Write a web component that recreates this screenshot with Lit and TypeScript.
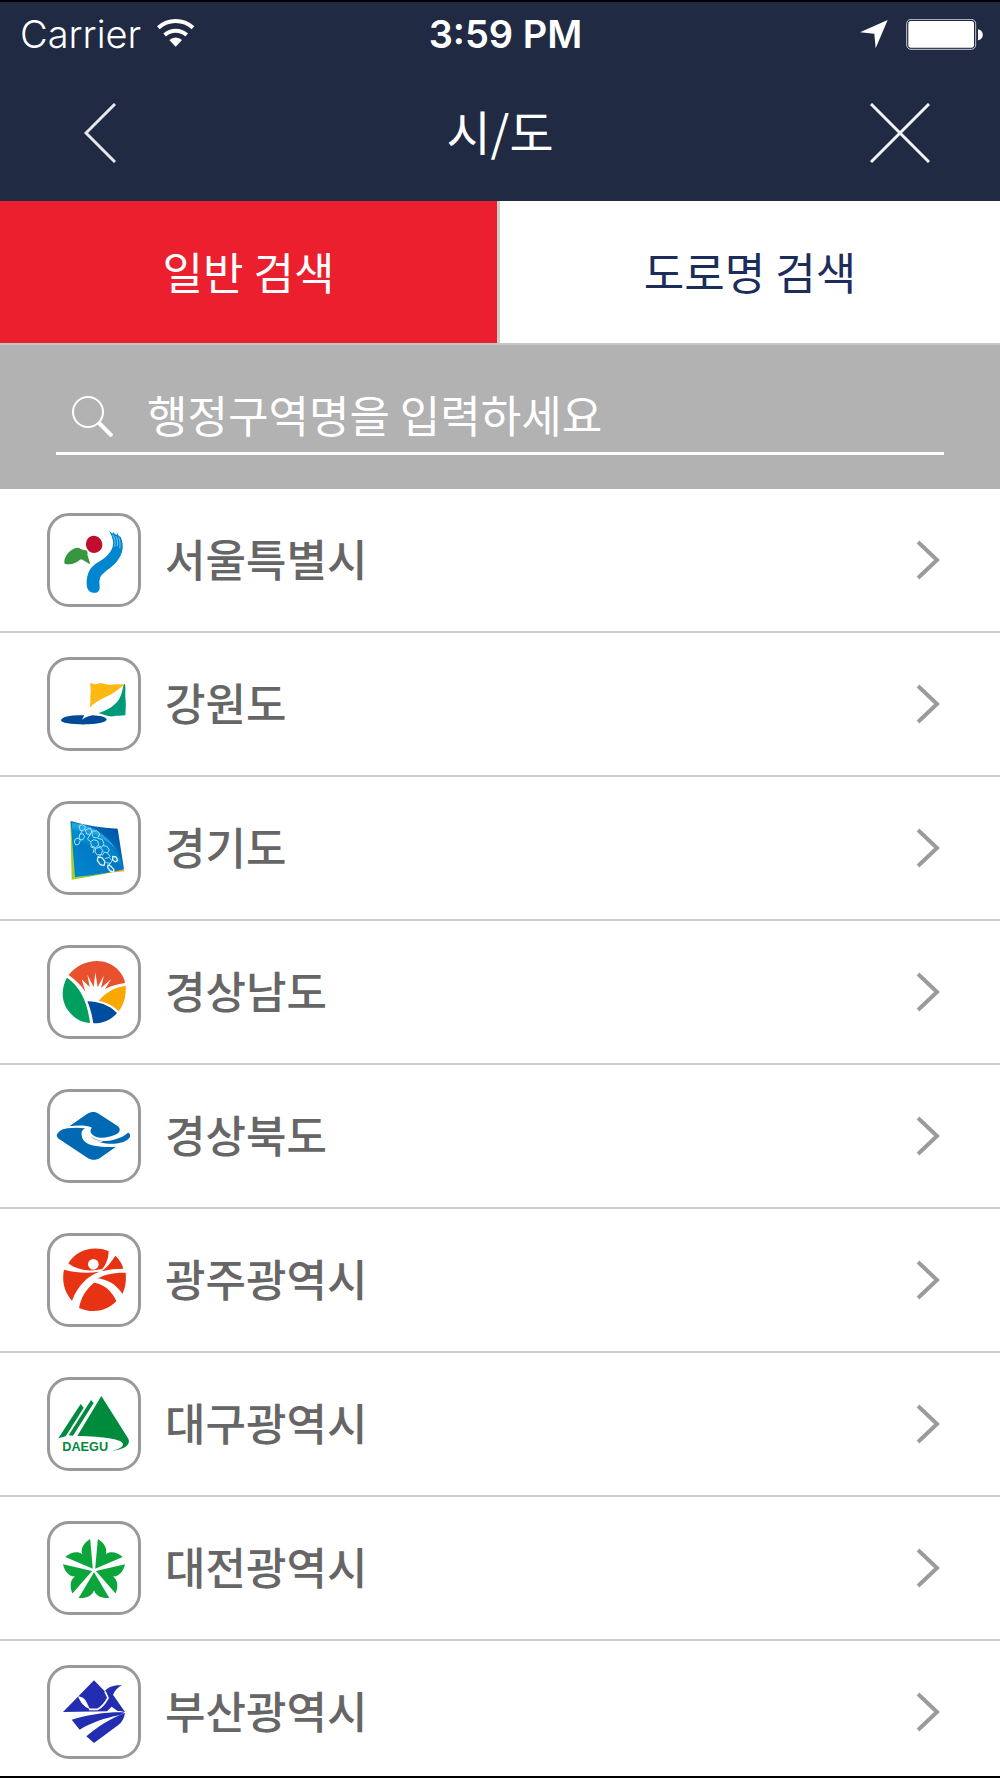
import { LitElement, html, svg, css } from "lit";
import { customElement, property, state } from "lit/decorators.js";
import { classMap } from "lit/directives/class-map.js";

const seoul = svg`
  <path fill="#c30d2e" d="M190 110c14 0 26 12 26 28 0 13-11 24-25 24s-24-12-24-26 9-26 23-26z"/>
  <path fill="#37963f" d="M102 193c-1-18 10-32 22-40 10-6 20-9 26-4 6 3 12 4 18 5 3 3 5 7 3 12l3 11c3 8 5 14 5 18-5-1-10-5-16-9-6-4-11-6-15-3-9 8-19 12-31 13-6 1-12 0-15-3z"/>
  <path fill="#0086d1" d="M235 94c4 5 9 8 12 10l1-6c3 6 8 8 11 10l1-6 6 9 5 3c6 13 8 27 5 40-5 22-18 39-36 52-14 10-26 19-31 30-4 12 0 23-1 34-3 10-11 13-21 11-12-3-17-12-18-24-1-23 5-41 16-53 12-13 29-19 41-30 11-10 20-22 22-35 2-17-5-32-13-45z"/>
  <path fill="none" stroke="#fff" stroke-width="1.500" d="M247 107c7 12 9 23 6 36M256 111c6 12 7 20 5 31M265 115c5 12 5 23 3 33"/>`;

const gangwon = svg`
  <path fill="#fdb813" d="M179 117c12 5 22 4 32 0 12 1 19 7 31 5 14-1 26-2 38 0-14 13-28 24-46 33-22 10-40 19-56 36 4-14 1-24 2-36 3-13 1-24-1-38z"/>
  <path fill="#00997a" d="M279 123l5-4c3 18-1 34 2 49 1 16 0 31-1 46-14 2-24 0-35 3-16 2-30-6-46-9 26-9 50-22 62-42 8-14 11-28 13-43z"/>
  <path fill="#004a98" d="M92 229c1-10 28-16 70-15l-7 13c10-7 20-11 31-13 24 1 41 5 43 12 0 9-25 14-56 15-44 1-81-3-81-12z"/>`;

const gyeonggi = svg`
  <defs>
    <linearGradient id="gg" x1="0" y1="1" x2="1" y2="0">
      <stop offset="0" stop-color="#0089d0"/><stop offset=".5" stop-color="#0078c1"/><stop offset="1" stop-color="#00479c"/>
    </linearGradient>
    <linearGradient id="ge" x1="0" y1="0" x2="1" y2="0">
      <stop offset="0" stop-color="#a5d025"/><stop offset=".5" stop-color="#92c83e"/><stop offset="1" stop-color="#f7a233"/>
    </linearGradient>
  </defs>
  <path fill="url(#ge)" d="M120 99l4 176c45-5 95-20 159-25l-5-6z"/>
  <path fill="url(#gg)" d="M121 99c46 13 92 21 141 23l19 122c-56 13-97 18-147 23z"/>
  <path fill="#23a3df" d="M125 105c60 4 112 38 143 96-22-38-75-70-143-76z"/>
  <path fill="#0094d8" opacity=".6" d="M125 118c65 8 117 43 147 96l4 24c-44-47-102-74-150-80z"/>
  <g fill="none" stroke="#a9e2fa" stroke-width="3" stroke-linejoin="round">
    <path d="M146 114l10-4 9 6-3 10-12 2z M156 128l-6 10M148 139l10-2 5 9-7 10-10-3z M135 153l9-3 6 8-5 11-9 2-4-9z"/>
    <path d="M165 126l14-6 6 9-5 10-11-1zM180 139l-8 13M185 130l14-2 9 10-6 12-13-2-4-10zM171 153l10 8 9-6 12 4 3 12-9 8-12-5-3-11M203 151l13 4 5 13-7 10-10-5"/>
    <path d="M180 176l13 5M192 181l-4 14M196 181l13-3 8 9-4 12-12 2-7-9zM218 173l12 2 7 11-6 9-12-3M232 195l8 12M213 200l-9 6M221 195l-6 8"/>
    <path stroke="#e4f7ff" stroke-width="4" d="M203 207l12 2 9 12-3 12-11-3-9-12zM233 231l8 3 10 11-2 7-9-3-8-10zM247 205l10 2 5 10-7 5-8-6z"/>
    <path d="M224 212l12-4 9 10-5 8-12-2M240 226l-4 6"/>
  </g>`;

const gyeongnam = svg`
  <path fill="#e9512e" d="M115 129c42-54 126-58 160 0 5 8 8 16 9 24-23 4-40 8-60 18l19-30-31 27 9-38-19 36-7-45-5 44-19-37 7 37-24-23 11 37c-14-21-29-34-50-50z"/>
  <path fill="#009f5f" d="M110 137c38 27 61 70 69 136-44-2-82-42-82-87 0-20 5-35 13-49z"/>
  <path fill="#f9a800" d="M286 161c2 28-4 54-21 77-18-18-36-27-60-31 19-24 44-40 81-46z"/>
  <path fill="#004da0" d="M171 208c34 1 64 10 89 35-18 21-44 32-71 31-4-25-9-45-18-66z"/>`;

const gyeongbuk = svg`
  <path fill="#0069b4" d="M117 154l54-38c12-7 24-7 34 0l58 38c7 7 7 14 1 20-14 10-39 15-57 14-13-1-20-8-25-14-3-7-1-12 3-16-19-8-43-7-68-4z"/>
  <path fill="#0069b4" d="M80 178c7-11 16-15 31-18 17-2 36-2 54 0-10 4-12 11-11 20 1 16 13 28 38 32 22 4 45 5 65 3l-47 33c-13 9-27 8-39 0l-86-57c-5-4-7-8-5-13z"/>
  <path fill="#0069b4" d="M181 184c18 15 44 18 70 10 19-5 33-13 42-21 7 2 8 10 4 16-13 15-38 18-61 17-24-1-44-7-55-22z"/>
  <path fill="#fff" d="M181 184c12 10 24 14 38 15l-9 3c-13-2-22-8-29-18z"/>`;

const gwangju = svg`
  <path fill="#e73213" d="M114 130c26-42 75-54 121-37-1 23-7 38-19 54-37 9-76 4-102-17z"/>
  <path fill="#e73213" d="M255 107c12 10 20 24 24 39-24 0-42 2-65 8 16-12 29-28 41-47z"/>
  <path fill="#e73213" d="M101 149c35 10 70 12 106 6-38 15-64 41-82 87-23-24-31-59-24-93z"/>
  <path fill="#e73213" d="M286 158c2 24 0 44-10 64-13-22-33-38-63-45-4-2-9-1-14 0 20-13 50-20 87-19z"/>
  <path fill="#e73213" d="M191 188c29 4 54 24 67 56-30 31-74 37-112 20 5-30 20-55 45-76z"/>
  <circle cx="189" cy="133" r="16" fill="#fff"/>`;

const daegu = svg`
  <g fill="#008a3c">
    <path d="M213 96l81 128c3 7 2 14-3 20-10 10-28 15-48 17 20-5 36-11 35-21-3-14-53-22-137-24z"/>
    <path d="M182 108l8 9-62 98-13-1z"/>
    <path d="M151 120l9 11-54 86c-8 2-15 4-22 6z"/>
  </g>
  <text x="96" y="261" font-family="Liberation Sans, Arial, sans-serif" font-size="38" font-weight="700" fill="#008a3c">DAEGU</text>`;

const daejeon = svg`${[0, 72, 144, 216, 288].map(
  (a) => svg`<path fill="#0ca53b" transform="rotate(${a} 191 187)" d="M191 193l-46 77c20 2 41-5 46-23 5 18 26 25 46 23z"/>`
)}`;

const busan = svg`
  <g fill="#232db1">
    <path d="M191 148l32 33c10-13 28-20 52-18-12 5-21 15-27 28l36 52c-7-1-14-3-22-3l-18-13-14 14-132 2z"/>
    <path d="M282 244c-4 4-9 7-15 9-44 8-83 22-119 43l-24-30c50-15 100-23 158-22z"/>
    <path d="M284 245c-2 16-9 28-20 37l-73 54-23-20c34-30 69-52 116-71z"/>
  </g>
  <path fill="#fff" d="M143 196c13 1 22 8 28 22l8 17c-17-7-29-20-36-39z"/>
  <path fill="none" stroke="#fff" stroke-width="5" d="M176 235h26c12-6 22-18 31-34l-9-20"/>`;

interface Region {
  name: string;
  slug: string;
  box: string;
  art: unknown;
}

const regions: Region[] = [
  { name: "서울특별시", slug: "seoul", box: "59 51 264 264", art: seoul },
  { name: "강원도", slug: "gangwon", box: "59 48 264 264", art: gangwon },
  { name: "경기도", slug: "gyeonggi", box: "59 48 264 264", art: gyeonggi },
  { name: "경상남도", slug: "gyeongnam", box: "59 48 264 264", art: gyeongnam },
  { name: "경상북도", slug: "gyeongbuk", box: "59 51 264 264", art: gyeongbuk },
  { name: "광주광역시", slug: "gwangju", box: "59 48 264 264", art: gwangju },
  { name: "대구광역시", slug: "daegu", box: "59 48 264 264", art: daegu },
  { name: "대전광역시", slug: "daejeon", box: "59 48 264 264", art: daejeon },
  { name: "부산광역시", slug: "busan", box: "59 111 264 264", art: busan },
];

@customElement("status-bar")
export class StatusBar extends LitElement {
  static styles = css`
    :host {
      display: grid;
      grid-template-columns: 1fr auto 1fr;
      align-items: center;
      height: 64px;
      padding: 0 17px 0 20px;
      font: 400 38px/44px Inter, "Liberation Sans", sans-serif;
      color: #fff;
    }
    .side { display: flex; align-items: center; gap: 16px; }
    .end { justify-content: flex-end; gap: 18px; }
    .time { padding-left: 8px; font-weight: 600; }
    .carrier { font-weight: 300; }
    svg { display: block; }
    .wifi { margin-bottom: 4px; }
  `;
  render() {
    return html`
      <div class="side">
        <span class="carrier">Carrier</span>
        <svg class="wifi" width="38" height="29" viewBox="470 52 114 87" fill="none" stroke="#fff" stroke-width="12" aria-hidden="true">
          <path d="M474 81a77 77 0 0 1 104 0M493 103a49 49 0 0 1 66 0" />
          <path fill="#fff" stroke="none" d="M526 138l-19-20a27 27 0 0 1 38 0z" />
        </svg>
      </div>
      <span class="time">3:59 PM</span>
      <div class="side end">
        <svg width="28" height="29" viewBox="1080 60 84 87" fill="#fff" aria-hidden="true">
          <path d="M1080 97l83-37-36 85-4-44z" />
        </svg>
        <svg width="77" height="31" viewBox="1218 54 231 93" aria-hidden="true">
          <rect x="1220" y="55" width="207" height="90" rx="13" fill="none" stroke="#c5c8d0" stroke-width="3" />
          <rect x="1225" y="60" width="197" height="80" rx="8" fill="#fff" />
          <path d="M1434 85c19 2 19 31 0 33z" fill="#fff" />
        </svg>
      </div>
    `;
  }
}

@customElement("region-row")
export class RegionRow extends LitElement {
  @property({ attribute: false }) region!: Region;
  static styles = css`
    :host { display: block; }
    .row {
      box-sizing: border-box;
      display: flex;
      align-items: center;
      height: 144px;
      padding: 0 60px 0 47px;
      border-bottom: 2px solid #cbcbcb;
      color: #666;
      text-decoration: none;
    }
    .logo {
      box-sizing: border-box;
      width: 94px;
      height: 94px;
      border: 3px solid #99999d;
      border-radius: 22px;
      background: #fff;
    }
    .logo svg { display: block; width: 88px; height: 88px; }
    .name {
      flex: 1;
      margin-left: 24px;
      padding-bottom: 4px;
      font-size: 44px;
      line-height: 60px;
      font-weight: 500;
    }
    .chevron { display: block; }
  `;
  render() {
    const r = this.region;
    return html`
      <a class="row" href="#${r.slug}">
        <span class="logo"><svg viewBox=${r.box} aria-hidden="true">${r.art}</svg></span>
        <span class="name">${r.name}</span>
        <svg class="chevron" width="24" height="40" viewBox="0 0 24 40" fill="none" stroke="#9b9b9f" stroke-width="4" aria-hidden="true">
          <path d="M2 2l19 18L2 38" />
        </svg>
      </a>
    `;
  }
}

@customElement("app-root")
export class AppRoot extends LitElement {
  @state() private tab = 0;
  static styles = css`
    :host {
      box-sizing: border-box;
      display: flex;
      flex-direction: column;
      height: 100vh;
      border: solid #000;
      border-width: 2px 0;
      background: #fff;
      font-family: "Noto Sans CJK KR", sans-serif;
    }
    button { border: 0; margin: 0; padding: 0; background: none; font: inherit; color: inherit; cursor: pointer; }
    svg { display: block; }
    .top { flex: none; background: #202a42; color: #fff; }
    .bar {
      display: grid;
      grid-template-columns: 1fr auto 1fr;
      align-items: center;
      height: 135px;
      padding: 0 70px 2px;
      box-sizing: border-box;
    }
    .icon { padding: 10px 0; width: 60px; display: flex; justify-content: center; }
    .close { justify-self: end; }
    .title { margin: 0; padding-bottom: 6px; font-size: 48px; line-height: 64px; font-weight: 400; }
    .tabs {
      flex: none;
      display: grid;
      grid-template-columns: 1fr 1fr;
      height: 144px;
      box-sizing: border-box;
      border-bottom: 2px solid #c6c6c6;
    }
    .tab { padding-bottom: 2px; font-size: 44px; line-height: 60px; color: #1c2d5a; }
    .tab:first-child { border-right: 3px solid #ccc; }
    .tab.on { background: #ec1f2e; color: #fff; }
    .search {
      flex: none;
      box-sizing: border-box;
      height: 144px;
      padding: 34px 56px;
      background: #b2b2b2;
    }
    .field {
      box-sizing: border-box;
      display: flex;
      align-items: center;
      gap: 34px;
      height: 76px;
      padding: 0 0 0 15px;
      border-bottom: 3px solid #fff;
    }
    .input {
      flex: 1;
      min-width: 0;
      height: 64px;
      padding: 0 0 4px;
      box-sizing: border-box;
      border: 0;
      outline: 0;
      background: none;
      font: 400 44px/60px "Noto Sans CJK KR", sans-serif;
      color: #fff;
    }
    .input::placeholder { color: #fff; opacity: 1; }
    .list {
      flex: 1;
      min-height: 0;
      margin: 0;
      padding: 0;
      list-style: none;
      overflow-y: auto;
      scrollbar-width: none;
    }
  `;
  render() {
    return html`
      <header class="top">
        <status-bar></status-bar>
        <div class="bar">
          <button class="icon" aria-label="뒤로">
            <svg width="32" height="60" viewBox="0 0 32 60" fill="none" stroke="#e6e8ec" stroke-width="3"><path d="M31 1L2 30l29 29" /></svg>
          </button>
          <h1 class="title">시/도</h1>
          <button class="icon close" aria-label="닫기">
            <svg width="60" height="60" viewBox="0 0 60 60" fill="none" stroke="#f2f3f5" stroke-width="3"><path d="M1 1l58 58M59 1L1 59" /></svg>
          </button>
        </div>
      </header>
      <nav class="tabs">
        ${["일반 검색", "도로명 검색"].map(
          (label, i) => html`<button
            class=${classMap({ tab: true, on: this.tab === i })}
            aria-pressed=${this.tab === i}
            @click=${() => (this.tab = i)}
          >${label}</button>`
        )}
      </nav>
      <form class="search" @submit=${(e: Event) => e.preventDefault()}>
        <div class="field">
          <label for="q" aria-label="검색">
            <svg width="42" height="42" viewBox="0 0 42 42" fill="none" stroke="#fff" aria-hidden="true">
              <circle cx="17" cy="17" r="15" stroke-width="2" />
              <path d="M28 28l13 13" stroke-width="4" />
            </svg>
          </label>
          <input class="input" id="q" type="text" placeholder="행정구역명을 입력하세요" />
        </div>
      </form>
      <ul class="list">
        ${regions.map((r) => html`<li><region-row .region=${r}></region-row></li>`)}
      </ul>
    `;
  }
}
